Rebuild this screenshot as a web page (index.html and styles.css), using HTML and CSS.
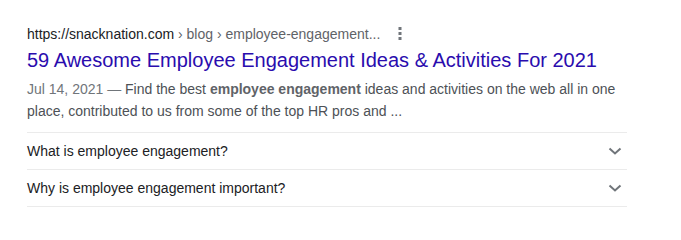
FILE: index.html
```html
<!DOCTYPE html>
<html lang="en">
<head>
    <meta charset="UTF-8">
    <meta name="viewport" content="width=device-width, initial-scale=1.0">
    <title>Search result</title>
    <link rel="stylesheet" href="styles.css">
</head>
<body>
    <div class="result">
        <div class="cite">
            <span class="domain">https://snacknation.com</span>
            <span class="crumbs"> › blog › employee-engagement...</span>
            <span class="more">
                <svg width="4" height="14" viewBox="0 0 4 14">
                    <rect x="0.5" y="0" width="3" height="3" fill="#70757a"/>
                    <rect x="0.5" y="5" width="3" height="3" fill="#70757a"/>
                    <rect x="0.5" y="10" width="3" height="3" fill="#70757a"/>
                </svg>
            </span>
        </div>
        <h3 class="title">59 Awesome Employee Engagement Ideas &amp; Activities For 2021</h3>
        <div class="snippet">
            <span class="date">Jul 14, 2021 — </span>Find the best <b>employee engagement</b> ideas and activities on the web all in one place, contributed to us from some of the top HR pros and ...
        </div>
        <div class="faq">
            <div class="faq-row">
                <span>What is employee engagement?</span>
                <svg class="chevron" width="14" height="8" viewBox="0 0 14 8"><path d="M1.5 1.5 L7 6.5 L12.5 1.5" fill="none" stroke="#70757a" stroke-width="2"/></svg>
            </div>
            <div class="faq-row">
                <span>Why is employee engagement important?</span>
                <svg class="chevron" width="14" height="8" viewBox="0 0 14 8"><path d="M1.5 1.5 L7 6.5 L12.5 1.5" fill="none" stroke="#70757a" stroke-width="2"/></svg>
            </div>
        </div>
    </div>
</body>
</html>
```

FILE: styles.css
```css
body {
    margin: 0;
    padding: 0;
    background: #fff;
    font-family: "Liberation Sans", Arial, sans-serif;
}
.result {
    width: 600px;
    padding: 24px 0 0 27px;
}
.cite {
    display: flex;
    align-items: center;
    font-size: 14px;
    line-height: 20px;
    height: 20px;
    color: #202124;
}
.crumbs {
    color: #5f6368;
    white-space: pre;
}
.more {
    display: flex;
    margin-left: 18px;
}
.title {
    margin: 3px 0 0;
    font-size: 20px;
    font-weight: normal;
    line-height: 26px;
    color: #2a0cae;
}
.snippet {
    margin-top: 5px;
    font-size: 14px;
    line-height: 22px;
    color: #4d5156;
}
.date {
    color: #70757a;
}
.snippet b {
    color: #5f6368;
}
.faq {
    margin-top: 10px;
    border-top: 1px solid #ebebeb;
}
.faq-row {
    display: flex;
    justify-content: space-between;
    align-items: center;
    height: 36px;
    border-bottom: 1px solid #ebebeb;
    font-size: 14px;
    color: #202124;
}
.chevron {
    margin-right: 5px;
}
```
